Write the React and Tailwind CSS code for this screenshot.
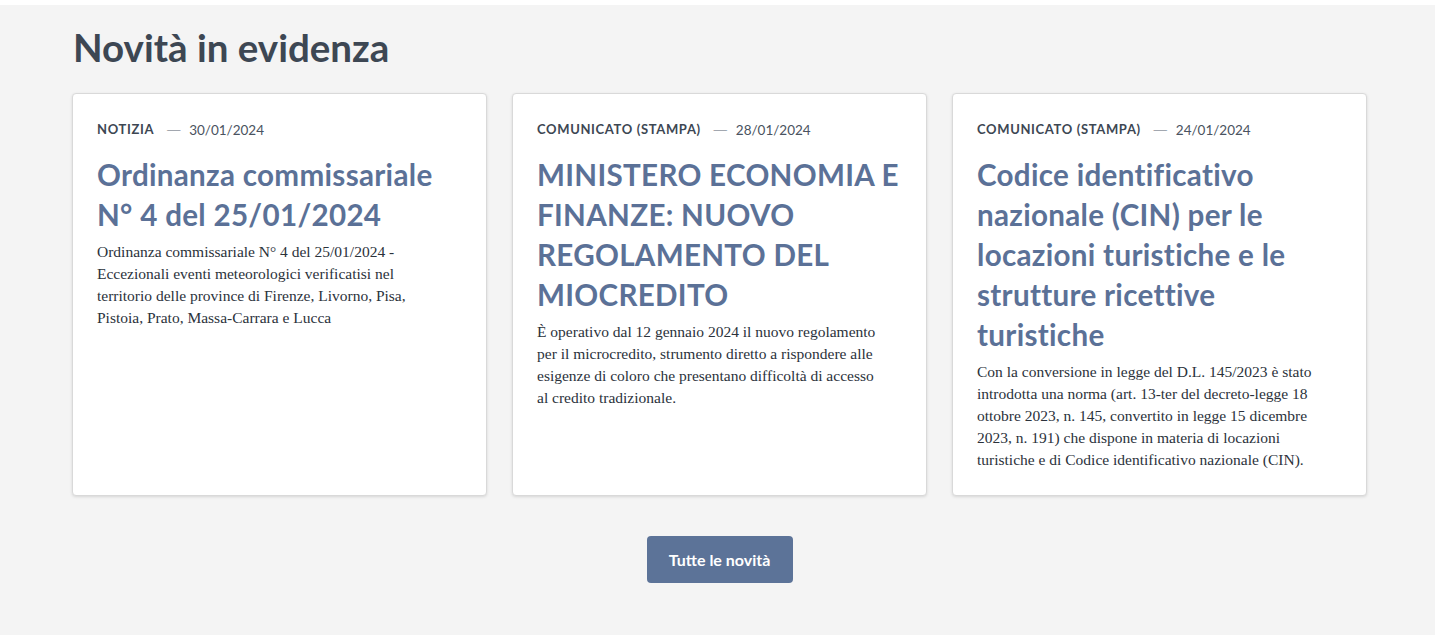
const heading = { fontFamily: "Lato, 'DejaVu Sans Condensed', sans-serif" };
const serif = { fontFamily: "'Liberation Serif', 'DejaVu Serif', serif" };
const dash = { fontFamily: "'DejaVu Sans', sans-serif" };

// body lines are kept as in the original layout (Lora wraps differently than the fallback serif)
const news = [
  {
    type: "Notizia",
    date: "30/01/2024",
    title: "Ordinanza commissariale N° 4 del 25/01/2024",
    lines: [
      "Ordinanza commissariale N° 4 del 25/01/2024 -",
      "Eccezionali eventi meteorologici verificatisi nel",
      "territorio delle province di Firenze, Livorno, Pisa,",
      "Pistoia, Prato, Massa-Carrara e Lucca",
    ],
  },
  {
    type: "Comunicato (stampa)",
    date: "28/01/2024",
    title: "MINISTERO ECONOMIA E FINANZE: NUOVO REGOLAMENTO DEL MIOCREDITO",
    lines: [
      "È operativo dal 12 gennaio 2024 il nuovo regolamento",
      "per il microcredito, strumento diretto a rispondere alle",
      "esigenze di coloro che presentano difficoltà di accesso",
      "al credito tradizionale.",
    ],
  },
  {
    type: "Comunicato (stampa)",
    date: "24/01/2024",
    title: "Codice identificativo nazionale (CIN) per le locazioni turistiche e le strutture ricettive turistiche",
    lines: [
      "Con la conversione in legge del D.L. 145/2023 è stato",
      "introdotta una norma (art. 13-ter del decreto-legge 18",
      "ottobre 2023, n. 145, convertito in legge 15 dicembre",
      "2023, n. 191) che dispone in materia di locazioni",
      "turistiche e di Codice identificativo nazionale (CIN).",
    ],
  },
];

const App = () => {
  return (
    <div className="min-h-[635px] w-full bg-white pt-[5px]">
      <div className="bg-[#f4f4f4] min-h-[630px] px-[72px] pt-[18px] pb-[50px]">
        <h2 style={heading} className="text-[38.5px] leading-[48px] font-bold text-[#3d4753] pl-[1px]">Novità in evidenza</h2>

        <div className="grid grid-cols-3 gap-[25px] mt-[22px] w-[1295px]">
          {news.map((item, i) => (
            <div key={i} className="bg-white border border-[#d9d9d9] rounded-[4px] shadow-[0_1px_3px_rgba(0,0,0,0.12)] px-6 pt-[26px] pb-6">
              <div style={heading} className="flex items-center text-[#3d4753] h-[20px]">
                <span className="uppercase font-bold text-[13px] tracking-[0.05em]">{item.type}</span>
                <span style={dash} className="ml-3 mr-2 text-[15px] font-light text-[#5a6472]">—</span>
                <span className="text-[13.5px] text-[#4a5360]">{item.date}</span>
              </div>
              <h3 style={heading} className="mt-[15px] text-[29.6px] leading-[40px] font-bold text-[#5b7197] tracking-[0.01em]">{item.title}</h3>
              <p style={serif} className="mt-[6px] text-[15.5px] leading-[22px] text-[#2b323b]">
                {item.lines.map((line, j) => (
                  <span key={j} className="block whitespace-nowrap">{line}</span>
                ))}
              </p>
            </div>
          ))}
        </div>

        <div className="flex justify-center mt-[40px] w-[1295px]">
          <button style={heading} className="w-[146px] h-[47px] bg-[#5c7398] text-white font-bold text-[16px] rounded-[4px]">Tutte le novità</button>
        </div>
      </div>
    </div>
  );
};

export default App;
